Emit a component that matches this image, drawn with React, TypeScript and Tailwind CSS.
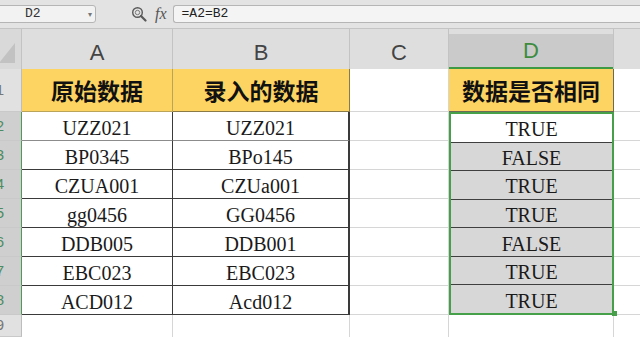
const rows = [
  { n: 2, a: "UZZ021", b: "UZZ021", d: "TRUE" },
  { n: 3, a: "BP0345", b: "BPo145", d: "FALSE" },
  { n: 4, a: "CZUA001", b: "CZUa001", d: "TRUE" },
  { n: 5, a: "gg0456", b: "GG0456", d: "TRUE" },
  { n: 6, a: "DDB005", b: "DDB001", d: "FALSE" },
  { n: 7, a: "EBC023", b: "EBC023", d: "TRUE" },
  { n: 8, a: "ACD012", b: "Acd012", d: "TRUE" },
];

const serif = "font-['Liberation_Serif','Noto_Sans_CJK_SC',serif]";
const cjk = "font-['Noto_Sans_CJK_SC',sans-serif]";

function FormulaBar() {
  return (
    <div className="flex h-[29px] items-center border-b border-[#c4c4c4] bg-[#e3e3e3]">
      <div className="ml-[-6px] flex h-[18px] w-[102px] items-center justify-between rounded-[3px] border border-[#b5b5b5] bg-[#f2f2f2] pl-[30px] pr-[3px]">
        <span className="font-['Liberation_Mono',monospace] text-[13px] text-[#333]">D2</span>
        <span className="text-[8px] leading-none text-[#777]">▾</span>
      </div>
      <svg width="16" height="16" viewBox="0 0 16 16" className="ml-[35px]">
        <circle cx="6.5" cy="6.5" r="4.8" fill="none" stroke="#5a5a5a" strokeWidth="1.4" />
        <circle cx="6.5" cy="6.5" r="2.2" fill="none" stroke="#7a7a7a" strokeWidth="1" />
        <path d="M10 10 L14.5 14.5" stroke="#5a5a5a" strokeWidth="2.2" strokeLinecap="round" />
      </svg>
      <span className="ml-[8px] font-['Liberation_Serif',serif] text-[16px] italic text-[#555]">fx</span>
      <div className="ml-[6px] flex h-[18px] flex-1 items-center rounded-l-[3px] border border-r-0 border-[#b5b5b5] bg-[#f4f4f4] pl-[8px]">
        <span className="font-['Liberation_Mono',monospace] text-[13px] text-[#222]">=A2=B2</span>
      </div>
    </div>
  );
}

function ColHeader({ label, selected }: { label: string; selected?: boolean }) {
  return (
    <div className="flex flex-col border-r border-[#c3c3c3] bg-[#dedede]">
      <div className="h-[6px]" />
      <div
        className={
          "flex flex-1 items-center justify-center font-['Liberation_Sans',sans-serif] text-[22px] " +
          (selected ? "border-b-2 border-[#3f9a44] bg-[#cacaca] text-[#3d8c40]" : "text-[#444]")
        }
      >
        {label}
      </div>
    </div>
  );
}

function RowHeader({ n, selected }: { n: number; selected?: boolean }) {
  return (
    <div
      className={
        "flex items-center justify-end overflow-hidden border-b border-[#c9c9c9] pr-[17px] font-['Liberation_Sans',sans-serif] text-[15px] " +
        (selected
          ? "border-r border-r-[#4f9a55] bg-[#cfcfcf] text-[#4d8c62]"
          : "border-r border-r-[#bdbdbd] bg-[#e1e1e1] text-[#777]")
      }
    >
      {n}
    </div>
  );
}

export default function App() {
  return (
    <div className="h-[337px] w-[640px] overflow-hidden bg-white">
      <FormulaBar />
      <div className="grid grid-cols-[22px_151px_177px_99px_165px_26px] grid-rows-[40px_43px_repeat(7,29px)_22px]">
        {/* column headers */}
        <div className="relative flex items-end justify-end border-r border-[#c3c3c3] bg-[#d9d9d9] pb-[6px] pr-[6px]">
          <div className="h-0 w-0 border-b-[20px] border-l-[16px] border-b-[#c2c2c2] border-l-transparent" />
        </div>
        <ColHeader label="A" />
        <ColHeader label="B" />
        <ColHeader label="C" />
        <ColHeader label="D" selected />
        <div className="bg-[#dedede]" />

        {/* row 1 */}
        <RowHeader n={1} />
        <div className={`flex items-center justify-center border-b border-r border-[#b9a45a] bg-[#fdd462] text-[23px] font-bold text-[#111] ${cjk}`}>
          原始数据
        </div>
        <div className={`flex items-center justify-center border-b border-r border-[#8a7a45] bg-[#fdd462] text-[23px] font-bold text-[#111] ${cjk}`}>
          录入的数据
        </div>
        <div className="border-b border-r border-[#d6d6d6]" />
        <div className={`flex items-center justify-center border-b border-r border-[#6a6a55] bg-[#fdd462] text-[23px] font-bold text-[#111] ${cjk}`}>
          数据是否相同
        </div>
        <div className="border-b border-[#d6d6d6]" />

        {rows.map((r, i) => {
          const line = i === 0 ? "border-b-[#8c8c8c]" : "border-b-[#3a3a3a]";
          return [
            <RowHeader key={`h${r.n}`} n={r.n} selected />,
            <div
              key={`a${r.n}`}
              className={`flex items-center justify-center border-b border-r border-r-[#3a3a3a] pt-[3px] text-[20px] leading-none text-[#1a1a1a] ${line} ${serif}`}
            >
              {r.a}
            </div>,
            <div
              key={`b${r.n}`}
              className={`flex items-center justify-center border-b border-r-2 border-r-[#3a3a3a] pt-[3px] text-[20px] leading-none text-[#1a1a1a] ${line} ${serif}`}
            >
              {r.b}
            </div>,
            <div key={`c${r.n}`} className="border-b border-r border-[#d6d6d6]" />,
            i === 0 ? (
              <div
                key="dcol"
                className="row-span-7 flex min-h-0 flex-col overflow-hidden border-2 border-[#45a049]"
              >
                {rows.map((d, j) => (
                  <div
                    key={d.n}
                    className={
                      `flex min-h-0 flex-1 basis-0 items-center justify-center pt-[3px] text-[20px] leading-none text-[#1a1a1a] ${serif} ` +
                      (j === 0 ? "bg-white" : "bg-[#d7d7d7]") +
                      (j < rows.length - 1 ? " border-b-[1.5px] border-[#3f3f3f]" : "")
                    }
                  >
                    {d.d}
                  </div>
                ))}
              </div>
            ) : null,
            <div key={`e${r.n}`} className="border-b border-[#d6d6d6]" />,
          ];
        })}

        {/* row 9 */}
        <RowHeader n={9} />
        <div className="border-r border-[#d6d6d6]" />
        <div className="border-r border-[#d6d6d6]" />
        <div className="border-r border-[#d6d6d6]" />
        <div className="relative border-r border-[#d6d6d6]">
          <div className="absolute right-[-4px] top-[-4px] h-[5px] w-[5px] bg-[#45a049]" />
        </div>
        <div />
      </div>
    </div>
  );
}
